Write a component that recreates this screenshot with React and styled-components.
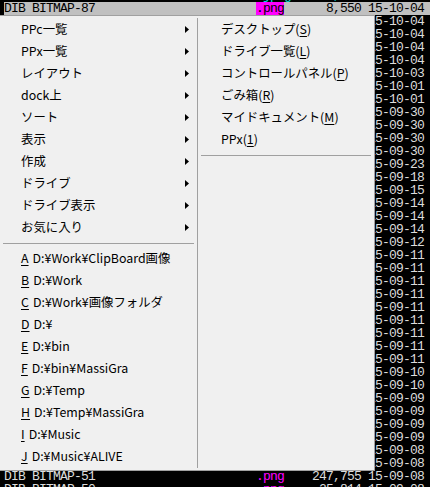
import React from "react";
import styled, { createGlobalStyle, css } from "styled-components";

const GlobalStyle = createGlobalStyle`
  html, body { margin: 0; padding: 0; background: #000; overflow: hidden; }
  #root { width: 430px; height: 487px; overflow: hidden; }
`;

const Screen = styled.div`
  position: relative;
  width: 430px;
  height: 487px;
  overflow: hidden;
  background: #000;
`;

const FileList = styled.div`
  margin-top: -11px;
  font-family: "Liberation Mono", monospace;
  font-size: 13px;
  letter-spacing: -0.8px;
  line-height: 13px;
  color: #dcdcdc;
`;

const Row = styled.div`
  display: grid;
  grid-template-columns: 4px 252px 28px 77px 63px;
  height: 13px;
  white-space: pre;
  ${(p) =>
    p.$tone === "cyan" &&
    css`
      color: #00e0e0;
    `}
  ${(p) =>
    p.$tone === "selected" &&
    css`
      background: #c0c0c0;
      color: #000;
    `}
`;

const Gutter = styled.span`
  background: ${(p) => (p.$cursor ? "#000" : "transparent")};
`;

const Name = styled.span``;

const Ext = styled.span`
  color: ${(p) => (p.$tone === "selected" ? "#000" : p.$tone === "cyan" ? "#00e0e0" : "#ff00ff")};
  background: ${(p) => (p.$tone === "selected" ? "#ff00ff" : "transparent")};
`;

const Size = styled.span`
  text-align: right;
`;

const DateCell = styled.span`
  padding-left: 7px;
`;

const Menu = styled.div`
  position: absolute;
  top: 15px;
  left: -1px;
  width: 376px;
  height: 456px;
  box-sizing: border-box;
  border: 1px solid #a0a0a0;
  background: #f0f0f0;
  padding: 2px 0;
  display: flex;
  font-family: "Noto Sans CJK JP", "Noto Sans", sans-serif;
  font-size: 12.4px;
  color: #000;
`;

const Column = styled.div`
  display: flex;
  flex-direction: column;
  box-sizing: border-box;
  ${(p) =>
    p.$first
      ? css`
          width: 198px;
          border-right: 1px solid #a0a0a0;
        `
      : css`
          flex: 1;
        `}
`;

const Item = styled.div`
  height: 22px;
  line-height: 22px;
  display: flex;
  align-items: center;
  padding-left: ${(p) => (p.$inset ? 23 : 21)}px;
  white-space: nowrap;
`;

const Key = styled.span`
  text-decoration: underline;
  text-underline-offset: 2px;
`;

const Path = styled.span`
  margin-left: 4px;
`;

const Arrow = styled.svg`
  margin-left: auto;
  margin-right: 8px;
  width: 4px;
  height: 7px;
  flex: none;
`;

const Separator = styled.div`
  height: 1px;
  background: #a0a0a0;
  margin: 5px 3px 3px 3px;
`;

const dates = [
  ...Array(4).fill("15-10-04"),
  "15-10-03",
  ...Array(2).fill("15-10-01"),
  ...Array(4).fill("15-09-30"),
  "15-09-23",
  "15-09-18",
  "15-09-15",
  ...Array(3).fill("15-09-14"),
  "15-09-12",
  ...Array(9).fill("15-09-11"),
  ...Array(2).fill("15-09-10"),
  ...Array(4).fill("15-09-09"),
  ...Array(2).fill("15-09-08"),
];

const rows = [
  { tone: "cyan", name: "", ext: ".jpeg", size: "12,346", date: "15-10-04" },
  { tone: "selected", name: "DIB BITMAP-87", ext: ".png", size: "8,550", date: "15-10-04" },
  ...dates.map((d, i) => ({
    name: `DIB BITMAP-${86 - i}`,
    ext: ".png",
    size: `${(i * 7919) % 90000 + 1000}`,
    date: d,
  })),
  { name: "DIB BITMAP-51", ext: ".png", size: "247,755", date: "15-09-08" },
  { name: "DIB BITMAP-50", ext: ".png", size: "25,814", date: "15-09-08" },
];

const submenus = [
  "PPc一覧",
  "PPx一覧",
  "レイアウト",
  "dock上",
  "ソート",
  "表示",
  "作成",
  "ドライブ",
  "ドライブ表示",
  "お気に入り",
];

const drives = [
  ["A", "D:¥Work¥ClipBoard画像"],
  ["B", "D:¥Work"],
  ["C", "D:¥Work¥画像フォルダ"],
  ["D", "D:¥"],
  ["E", "D:¥bin"],
  ["F", "D:¥bin¥MassiGra"],
  ["G", "D:¥Temp"],
  ["H", "D:¥Temp¥MassiGra"],
  ["I", "D:¥Music"],
  ["J", "D:¥Music¥ALIVE"],
];

const places = [
  ["デスクトップ(", "S", ")"],
  ["ドライブ一覧(", "L", ")"],
  ["コントロールパネル(", "P", ")"],
  ["ごみ箱(", "R", ")"],
  ["マイドキュメント(", "M", ")"],
  ["PPx(", "1", ")"],
];

export default function App() {
  return (
    <Screen>
      <GlobalStyle />
      <FileList>
        {rows.map((r, i) => (
          <Row key={i} $tone={r.tone}>
            <Gutter $cursor={r.tone === "selected"} />
            <Name>{r.name}</Name>
            <Ext $tone={r.tone}>{r.ext}</Ext>
            <Size>{r.size}</Size>
            <DateCell>{r.date}</DateCell>
          </Row>
        ))}
      </FileList>
      <Menu>
        <Column $first>
          {submenus.map((s) => (
            <Item key={s}>
              {s}
              <Arrow viewBox="0 0 4 7">
                <polygon points="0,0 4,3.5 0,7" fill="#000" />
              </Arrow>
            </Item>
          ))}
          <Separator />
          {drives.map(([k, p]) => (
            <Item key={k}>
              <Key>{k}</Key>
              <Path>{p}</Path>
            </Item>
          ))}
        </Column>
        <Column>
          {places.map(([a, k, b]) => (
            <Item key={a} $inset>
              {a}
              <Key>{k}</Key>
              {b}
            </Item>
          ))}
          <Separator />
        </Column>
      </Menu>
    </Screen>
  );
}
